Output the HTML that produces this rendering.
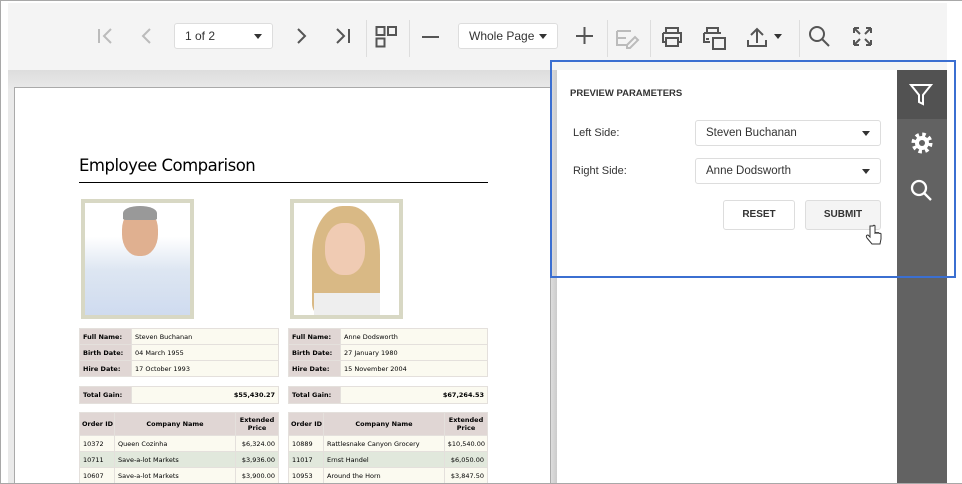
<!DOCTYPE html>
<html><head><style>
*{box-sizing:border-box;margin:0;padding:0}
body{width:962px;height:484px;overflow:hidden;font-family:"Liberation Sans",sans-serif;background:#fff;position:relative}
.frame{position:absolute;left:0;top:0;width:962px;height:484px;border:1px solid #a8a8a8;border-right:none}
.tb{position:absolute;left:8px;top:3px;width:939px;height:67px;background:#f4f4f4}
.ab{position:absolute}
.ic{position:absolute;stroke:#555;fill:none;stroke-width:2}
.sel{position:absolute;background:#fff;border:1px solid #ddd;border-radius:3px;font-size:12px;color:#333;padding:0 0 0 10px;line-height:24px}
.sel:after{content:"";position:absolute;right:10px;top:10px;border:4px solid transparent;border-top:5px solid #333}
.sep{position:absolute;top:17px;width:1px;height:37px;background:#ddd}
.content{position:absolute;left:8px;top:70px;width:549px;height:414px;background:linear-gradient(#ddd,#eaeaea 20px,#eaeaea)}
.page{position:absolute;left:14px;top:87px;width:537px;height:397px;background:#fff;border:1px solid #aaa;border-bottom:none}
table{position:absolute;border-collapse:collapse;font-family:"DejaVu Sans",sans-serif;font-size:6.5px;table-layout:fixed}
td{border:1.5px solid #e4e0dc;padding:0 3px;height:16px;white-space:nowrap;overflow:hidden}
td.l{background:#e0d6d4;font-weight:bold}
td.v{background:#fbfaf0}
td.h{white-space:normal;line-height:8px}
</style></head><body>
<div class="tb">
 <svg class="ic" style="left:89px;top:24px;stroke:#bbb" width="16" height="18"><path d="M2 2v14M14 2l-7 7 7 7"/></svg>
 <svg class="ic" style="left:133px;top:24px;stroke:#bbb" width="12" height="18"><path d="M9 2l-7 7 7 7"/></svg>
 <div class="sel" style="left:166px;top:20px;width:99px;height:26px">1 of 2</div>
 <svg class="ic" style="left:287px;top:24px" width="12" height="18"><path d="M3 2l7 7-7 7"/></svg>
 <svg class="ic" style="left:327px;top:24px" width="16" height="18"><path d="M2 2l7 7-7 7M14 2v14"/></svg>
 <div class="sep" style="left:358px"></div>
 <svg class="ic" style="left:367px;top:22px" width="24" height="24"><rect x="1.5" y="2" width="8" height="8"/><rect x="13" y="2" width="8" height="8"/><rect x="1.5" y="13.5" width="8" height="8"/></svg>
 <div class="sep" style="left:401px"></div>
 <svg class="ic" style="left:413px;top:24px" width="20" height="20"><path d="M1 10h17"/></svg>
 <div class="sel" style="left:450px;top:20px;width:100px;height:26px">Whole Page</div>
 <svg class="ic" style="left:567px;top:23px" width="20" height="20"><path d="M1 10h17M9.5 1v17"/></svg>
 <div class="sep" style="left:599px"></div>
 <svg class="ic" style="left:607px;top:24px;stroke:#bbb" width="26" height="22"><path d="M2 4h14M2 4v14h10M2 11h9M12 18l8-8 3 3-8 8h-3z"/></svg>
 <div class="sep" style="left:642px"></div>
 <svg class="ic" style="left:652px;top:22px" width="24" height="24"><path d="M6 8V3h12v5M3 8h18v9h-3M6 17H3V8M6 13h12v8H6z"/></svg>
 <svg class="ic" style="left:694px;top:22px" width="28" height="26"><path d="M5 8V3h11v5M2 8h17M2 8v9h6M7 14h-3M11 13h12v11H11z"/></svg>
 <svg class="ic" style="left:738px;top:22px" width="24" height="24"><path d="M11 18V4M5 10l6-6 6 6M2 15v6h18v-6"/></svg>
 <div class="ab" style="left:766px;top:31px;border:4px solid transparent;border-top:5px solid #333"></div>
 <div class="sep" style="left:791px"></div>
 <svg class="ic" style="left:800px;top:22px" width="24" height="24"><circle cx="9" cy="9" r="7"/><path d="M14 14l7 7"/></svg>
 <svg class="ic" style="left:843px;top:22px" width="24" height="24"><path d="M3 3l6 6M3 3v5M3 3h5M20 3l-6 6M20 3v5M20 3h-5M3 20l6-6M3 20v-5M3 20h5M20 20l-6-6M20 20v-5M20 20h-5"/></svg>
</div>
<div class="content"></div>
<div class="page">
 <div class="ab" style="left:64px;top:68px;font-family:'DejaVu Sans',sans-serif;font-size:16.5px;color:#000;letter-spacing:-0.5px">Employee Comparison</div>
 <div class="ab" style="left:64px;top:94px;width:409px;height:1px;background:#000"></div>
 <div class="ab" style="left:66px;top:111px;width:113px;height:120px;border:4px solid #d8d8c4;background:linear-gradient(#fff 0,#fff 30%,#dde6f2 60%,#cfdbef)"><div style="position:absolute;left:37px;top:5px;width:36px;height:48px;border-radius:45%;background:#e0b090"></div><div style="position:absolute;left:38px;top:3px;width:34px;height:14px;border-radius:50% 50% 10% 10%;background:#999"></div></div>
 <div class="ab" style="left:275px;top:111px;width:113px;height:120px;border:4px solid #d8d8c4;background:#fff"><div style="position:absolute;left:18px;top:3px;width:68px;height:108px;border-radius:45% 45% 10% 10%;background:#d9b985"></div><div style="position:absolute;left:31px;top:20px;width:40px;height:52px;border-radius:45%;background:#f0cbb3"></div><div style="position:absolute;left:20px;top:90px;width:66px;height:22px;background:#eee"></div></div>
 <table style="left:64px;top:240px;width:200px"><tr><td class="l" style="width:52px">Full Name:</td><td class="v">Steven Buchanan</td></tr><tr><td class="l">Birth Date:</td><td class="v">04 March 1955</td></tr><tr><td class="l">Hire Date:</td><td class="v">17 October 1993</td></tr></table>
 <table style="left:273px;top:240px;width:200px"><tr><td class="l" style="width:52px">Full Name:</td><td class="v">Anne Dodsworth</td></tr><tr><td class="l">Birth Date:</td><td class="v">27 January 1980</td></tr><tr><td class="l">Hire Date:</td><td class="v">15 November 2004</td></tr></table>
 <table style="left:64px;top:298px;width:200px"><tr><td class="l" style="width:52px;height:17px">Total Gain:</td><td class="v" style="text-align:right;font-weight:bold">$55,430.27</td></tr></table>
 <table style="left:273px;top:298px;width:200px"><tr><td class="l" style="width:52px;height:17px">Total Gain:</td><td class="v" style="text-align:right;font-weight:bold">$67,264.53</td></tr></table>
 <table style="left:64px;top:324px;width:200px"><tr><td class="l" style="width:35px;height:23px;padding:0 2px">Order ID</td><td class="l" style="text-align:center">Company Name</td><td class="l h" style="width:43px;text-align:center">Extended Price</td></tr>
 <tr><td class="v">10372</td><td class="v">Queen Cozinha</td><td class="v" style="text-align:right">$6,324.00</td></tr>
 <tr><td style="background:#e1e8dc">10711</td><td style="background:#e1e8dc">Save-a-lot Markets</td><td style="background:#e1e8dc;text-align:right">$3,936.00</td></tr>
 <tr><td class="v">10607</td><td class="v">Save-a-lot Markets</td><td class="v" style="text-align:right">$3,900.00</td></tr></table>
 <table style="left:273px;top:324px;width:200px"><tr><td class="l" style="width:35px;height:23px;padding:0 2px">Order ID</td><td class="l" style="text-align:center">Company Name</td><td class="l h" style="width:43px;text-align:center">Extended Price</td></tr>
 <tr><td class="v">10889</td><td class="v">Rattlesnake Canyon Grocery</td><td class="v" style="text-align:right;padding:0 2px">$10,540.00</td></tr>
 <tr><td style="background:#e1e8dc">11017</td><td style="background:#e1e8dc">Ernst Handel</td><td style="background:#e1e8dc;text-align:right">$6,050.00</td></tr>
 <tr><td class="v">10953</td><td class="v">Around the Horn</td><td class="v" style="text-align:right">$3,847.50</td></tr></table>
</div>
<div class="ab" style="left:551px;top:70px;width:6px;height:414px;background:linear-gradient(90deg,#ddd,#ccc)"></div>
<div class="ab" style="left:557px;top:70px;width:340px;height:414px;background:#fff"></div>
<div class="ab" style="left:897px;top:70px;width:50px;height:414px;background:#626262"></div>
<div class="ab" style="left:897px;top:70px;width:50px;height:49px;background:#525252"></div>
<svg class="ic" style="left:909px;top:82px;stroke:#fff" width="26" height="26"><path d="M2 3h20l-8 10v9l-4-2v-7z"/></svg>
<svg class="ab" style="left:910px;top:131px" width="24" height="24"><circle cx="12" cy="12" r="8.5" fill="none" stroke="#fff" stroke-width="4" stroke-dasharray="3.4 3.27"/><circle cx="12" cy="12" r="7" fill="#fff"/><circle cx="12" cy="12" r="3" fill="#626262"/></svg>
<svg class="ic" style="left:910px;top:179px;stroke:#fff;stroke-width:2.3" width="24" height="24"><circle cx="9" cy="9" r="7"/><path d="M14 14l7 7"/></svg>
<div class="ab" style="left:570px;top:88px;font-size:9.5px;font-weight:bold;color:#333">PREVIEW PARAMETERS</div>
<div class="ab" style="left:573px;top:127px;font-size:11px;color:#333">Left Side:</div>
<div class="ab" style="left:573px;top:165px;font-size:11px;color:#333">Right Side:</div>
<div class="sel" style="left:695px;top:120px;width:186px;height:26px;line-height:24px;font-size:11.5px">Steven Buchanan</div>
<div class="sel" style="left:695px;top:158px;width:186px;height:26px;line-height:24px;font-size:11.5px">Anne Dodsworth</div>
<div class="ab" style="left:723px;top:200px;width:72px;height:30px;border:1px solid #ddd;border-radius:3px;font-size:10px;font-weight:bold;color:#333;text-align:center;line-height:28px">RESET</div>
<div class="ab" style="left:805px;top:200px;width:76px;height:30px;border:1px solid #ddd;border-radius:3px;background:#f4f4f4;font-size:10px;font-weight:bold;color:#333;text-align:center;line-height:28px">SUBMIT</div>
<svg class="ab" style="left:865px;top:224px" width="18" height="24"><path d="M5 2v11l-2-2c-2 0-2 2-1 3l5 6h8l1-5v-5c0-1-2-1-2 0 0-2-2-2-2 0 0-2-2-2-2 0V2c0-1-2-1-2 0z" fill="#fff" stroke="#333" stroke-width="1"/></svg>
<div class="ab" style="left:550px;top:60px;width:406px;height:218px;border:2px solid #3b6fd1"></div>
<div class="frame"></div>
</body></html>
